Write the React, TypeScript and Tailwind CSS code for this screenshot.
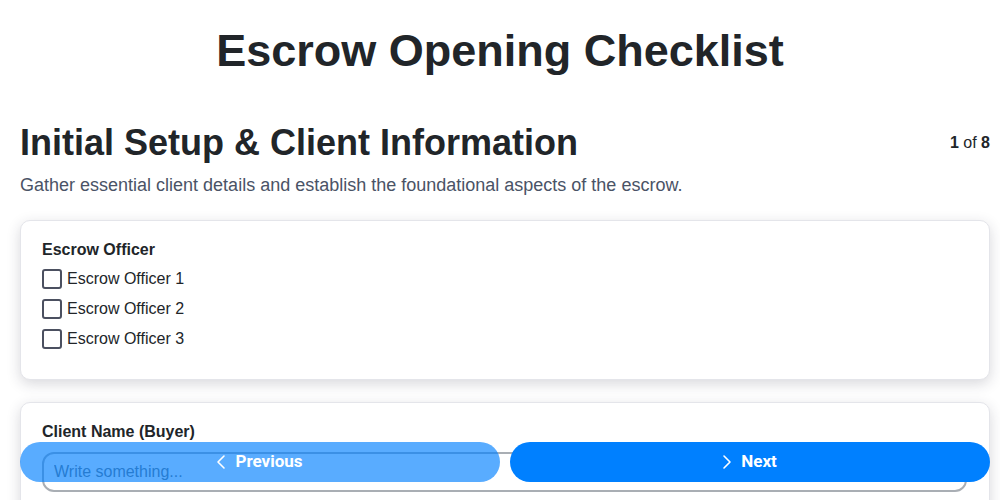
import { ChevronLeft, ChevronRight } from "lucide-react";

const officers = ["Escrow Officer 1", "Escrow Officer 2", "Escrow Officer 3"];

function Checkbox({ label }: { label: string }) {
  return (
    <label className="flex h-[30px] items-center gap-[5px] cursor-pointer">
      <input type="checkbox" className="peer sr-only" />
      <span className="h-[20px] w-[20px] rounded-[3px] border-2 border-[#4b5060] bg-white" />
      <span className="text-[16px] leading-6 text-[#212529]">{label}</span>
    </label>
  );
}

export default function App() {
  return (
    <div
      className="min-h-[500px] bg-white text-[#212529]"
      style={{ fontFamily: '"Liberation Sans", Arial, sans-serif' }}
    >
      <h1 className="mt-6 text-center text-[45px] font-bold leading-[54px]">
        Escrow Opening Checklist
      </h1>

      <main className="pl-5 pr-[10px] pb-24">
        <div className="mt-[43px] flex items-center justify-between">
          <h2 className="text-[36px] font-bold leading-[43px]">
            Initial Setup &amp; Client Information
          </h2>
          <div className="text-[16px] leading-6">
            <span className="font-bold">1</span> of <span className="font-bold">8</span>
          </div>
        </div>
        <p className="mt-2 text-[18px] leading-[27px] text-[#4a5366]">
          Gather essential client details and establish the foundational aspects of the escrow.
        </p>

        <section className="mt-[21px] rounded-[10px] border border-[#e4e5ea] bg-white px-[21px] pt-[17px] pb-[25px] shadow-[0_4px_14px_rgba(40,40,60,0.18)]">
          <div className="mb-[2px] text-[16px] font-bold leading-6">Escrow Officer</div>
          {officers.map((o) => (
            <Checkbox key={o} label={o} />
          ))}
        </section>

        <section className="mt-[22px] rounded-[10px] border border-[#e4e5ea] bg-white pl-[21px] pr-[22px] pt-[17px] pb-6 shadow-[0_4px_14px_rgba(40,40,60,0.18)]">
          <div className="text-[16px] font-bold leading-6">Client Name (Buyer)</div>
          <input
            type="text"
            placeholder="Write something..."
            className="mt-2 h-10 w-full rounded-xl border-2 border-[#a9aeb4] px-[10px] text-[16px] text-[#212529] outline-none placeholder:text-[#6c757d]"
          />
        </section>
      </main>

      <div
        className="fixed bottom-[18px] left-0 right-0 flex gap-[10px] pl-5 pr-[10px]"
        style={{ fontFamily: 'Roboto, "Liberation Sans", sans-serif' }}
      >
        <button className="flex h-10 flex-1 items-center justify-center gap-[2px] rounded-full bg-[#0080ff] pr-2 text-[17px] font-bold text-white opacity-65">
          <ChevronLeft size={24} strokeWidth={1.6} />
          Previous
        </button>
        <button className="flex h-10 flex-1 items-center justify-center gap-[2px] rounded-full bg-[#0080ff] pr-2 text-[17px] font-bold text-white">
          <ChevronRight size={24} strokeWidth={1.6} />
          Next
        </button>
      </div>
    </div>
  );
}
